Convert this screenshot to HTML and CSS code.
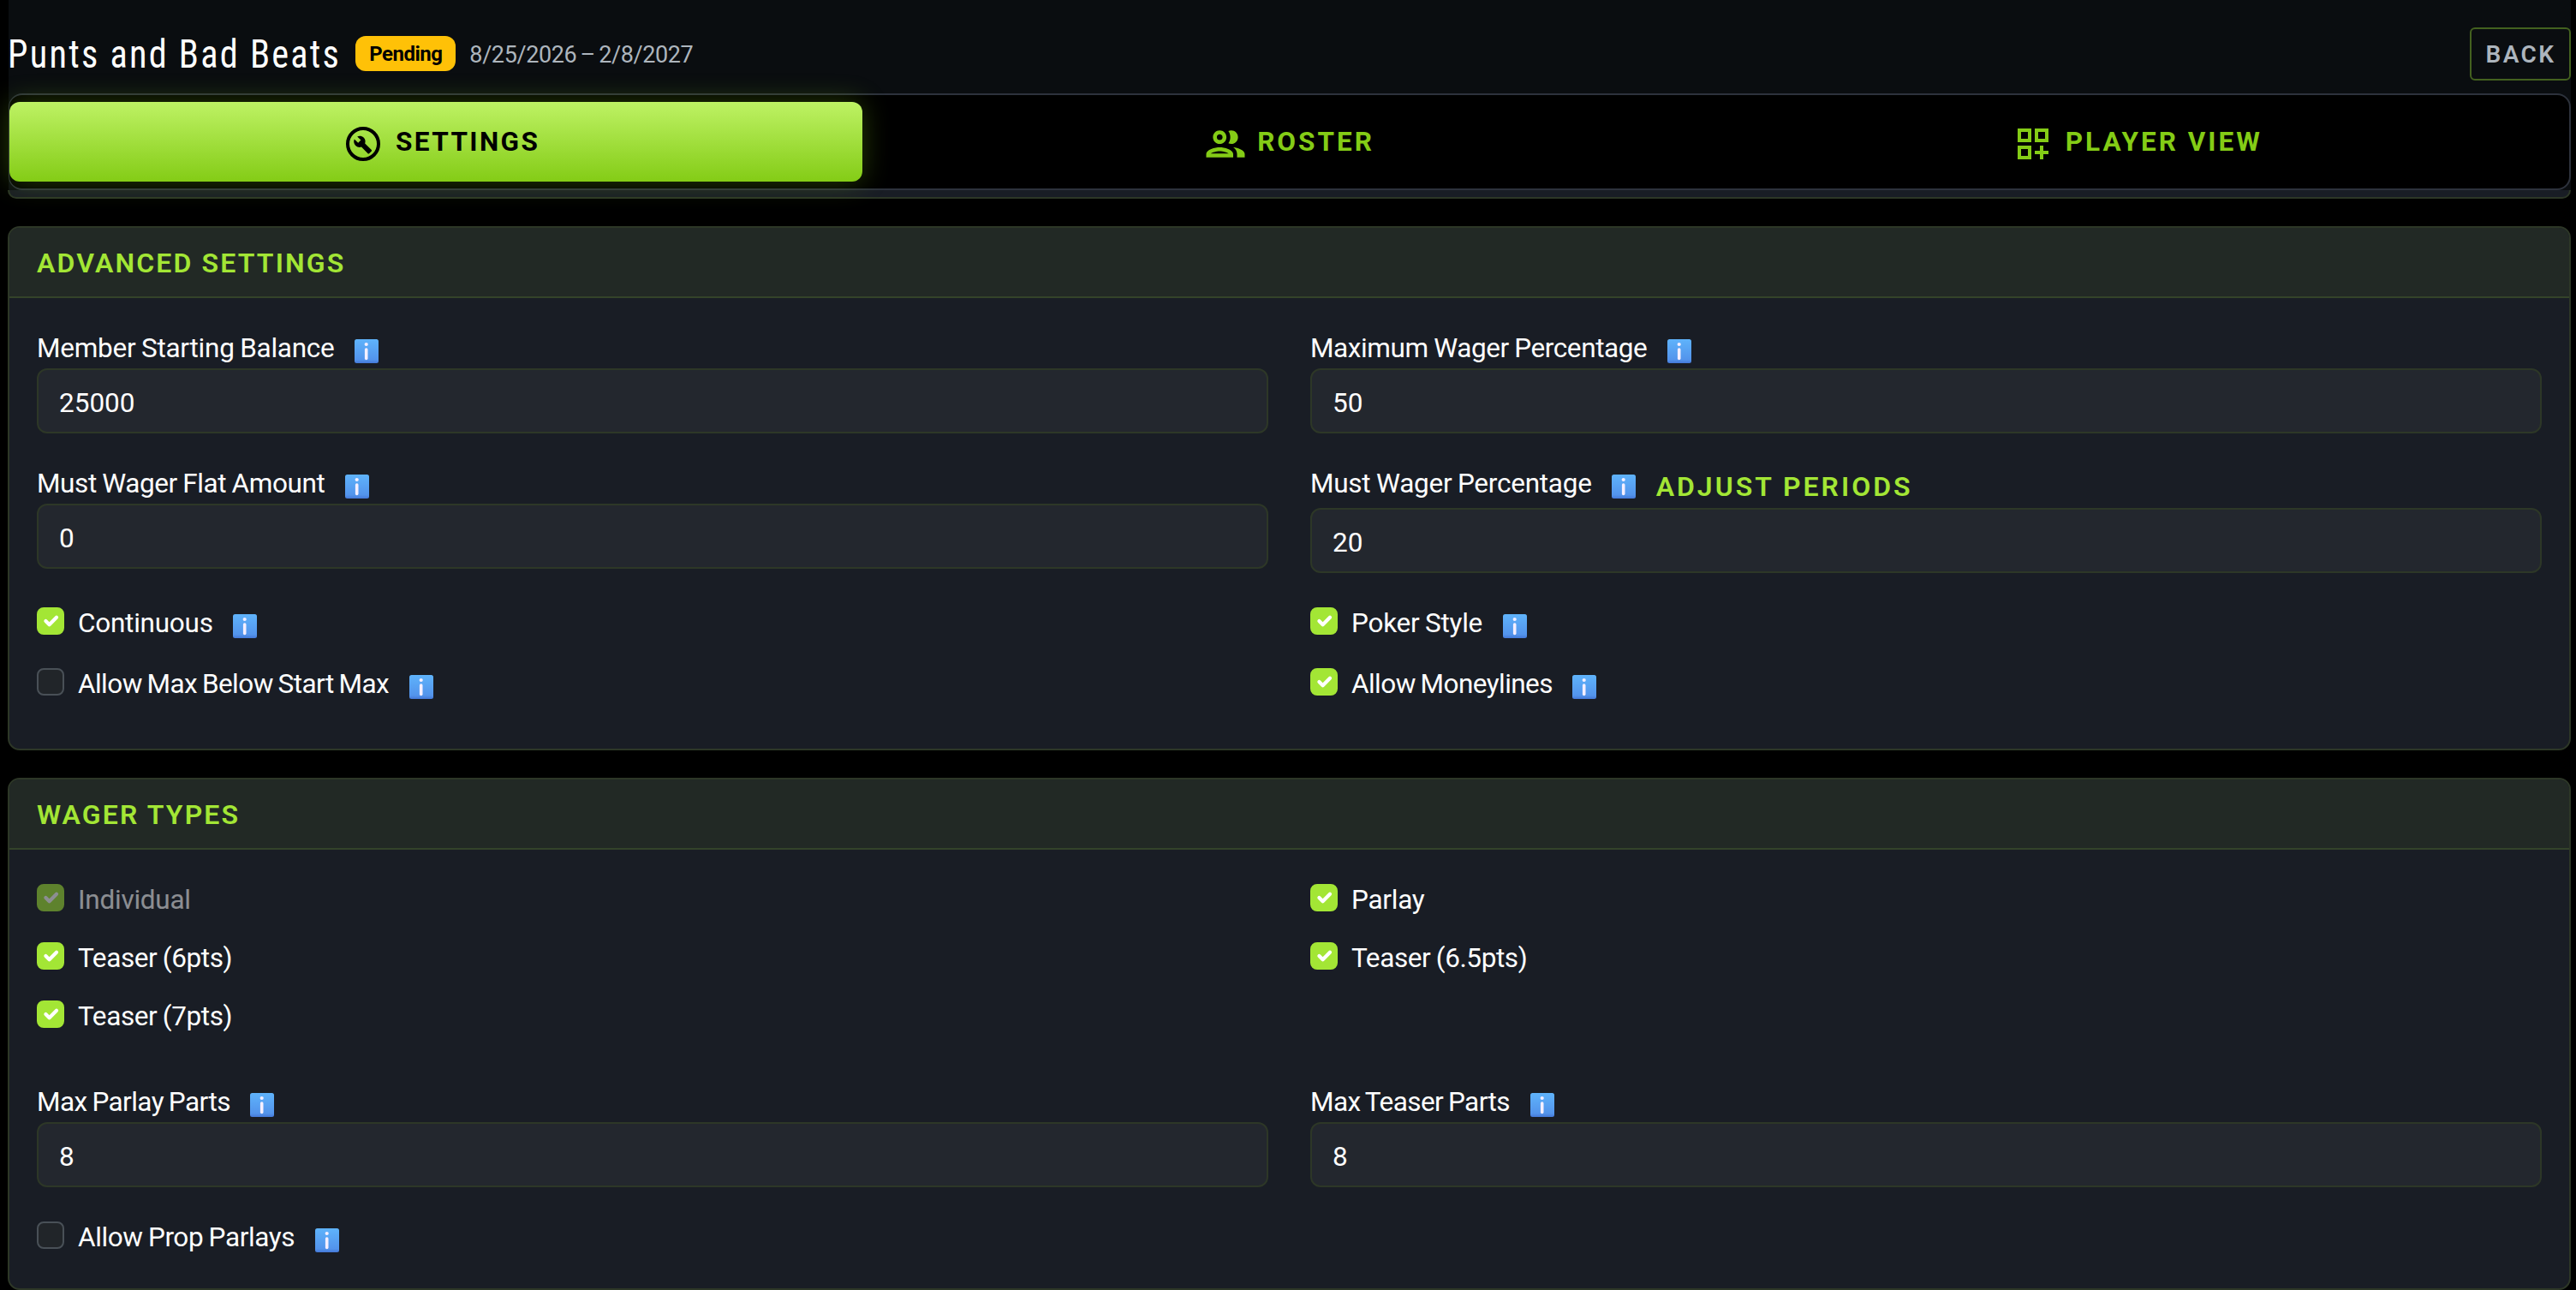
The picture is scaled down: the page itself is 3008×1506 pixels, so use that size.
FILE: index.html
```html
<!DOCTYPE html>
<html lang="en">
<head>
    <meta charset="UTF-8">
    <meta name="viewport" content="width=device-width, initial-scale=1.0">
    <title>Punts and Bad Beats</title>
    <link rel="stylesheet" href="styles.css">
</head>
<body>
    <!-- Shared icons -->
    <svg class="sprite">
        <linearGradient id="info-bg" x1="0" y1="0" x2="0" y2="1">
            <stop offset="0" stop-color="#5fb3fb"/>
            <stop offset="0.85" stop-color="#5394ec"/>
            <stop offset="1" stop-color="#4478d8"/>
        </linearGradient>
        <symbol id="info" viewBox="0 0 28 28">
            <rect width="28" height="28" rx="2.5" fill="url(#info-bg)"/>
            <circle cx="13.7" cy="6" r="2.1" fill="#f5efff"/>
            <path d="M13.7 12v10.5" stroke="#f5efff" stroke-width="3.6" stroke-linecap="round"/>
        </symbol>
    </svg>

    <header class="page-header">
        <div class="title-bar">
            <h1>Punts and Bad Beats</h1>
            <span class="badge">Pending</span>
            <span class="dates">8/25/2026 – 2/8/2027</span>
            <button class="back">Back</button>
        </div>
        <nav class="tabs">
            <a class="tab tab-settings active">
                <svg class="tab-icon" viewBox="0 0 24 24"><path fill="none" stroke="currentColor" stroke-width="2" d="M12 3a9 9 0 1 0 0 18a9 9 0 1 0 0-18z"/><path d="M16.9 15.5l-3.8-3.8c.4-1.1.2-2.5-.8-3.4-1-1-2.5-1.2-3.7-.6l2.1 2.1-1.6 1.6-2.2-2.1c-.6 1.2-.3 2.7.7 3.7.9.9 2.3 1.2 3.4.8l3.8 3.8c.2.2.5.2.7 0l1.4-1.4c.2-.2.2-.5 0-.7z"/></svg>
                <span>Settings</span>
            </a>
            <a class="tab tab-roster">
                <svg class="tab-icon" viewBox="0 0 24 24"><path d="M9 13.75c-2.34 0-7 1.17-7 3.5V19h14v-1.75c0-2.33-4.66-3.5-7-3.5zM4.34 17c.84-.58 2.87-1.25 4.66-1.25s3.82.67 4.66 1.25H4.34zM9 12c1.93 0 3.5-1.57 3.5-3.5S10.93 5 9 5 5.5 6.57 5.5 8.5 7.07 12 9 12zm0-5c.83 0 1.5.67 1.5 1.5S9.83 10 9 10s-1.5-.67-1.5-1.5S8.17 7 9 7zm7.04 6.81c1.16.84 1.96 1.96 1.96 3.44V19h4v-1.75c0-2.02-3.5-3.17-5.96-3.44zM15 12c1.93 0 3.5-1.57 3.5-3.5S16.93 5 15 5c-.54 0-1.04.13-1.5.35.63.89 1 1.98 1 3.15s-.37 2.26-1 3.15c.46.22.96.35 1.5.35z"/></svg>
                <span>Roster</span>
            </a>
            <a class="tab tab-player">
                <svg class="tab-icon" viewBox="0 0 24 24"><path d="M3 11h8V3H3v8zm2-6h4v4H5V5zm8-2v8h8V3h-8zm6 6h-4V5h4v4zM3 21h8v-8H3v8zm2-6h4v4H5v-4zm13-2h-2v3h-3v2h3v3h2v-3h3v-2h-3z"/></svg>
                <span>Player View</span>
            </a>
        </nav>
    </header>

    <main>
        <section class="card card-end"></section>

        <section class="card">
            <h2>Advanced Settings</h2>
            <div class="fields">
                <div class="field">
                    <label><span>Member Starting Balance</span><svg class="info"><use href="#info"/></svg></label>
                    <input type="text" value="25000">
                </div>
                <div class="field">
                    <label><span class="snug">Maximum Wager Percentage</span><svg class="info"><use href="#info"/></svg></label>
                    <input type="text" value="50">
                </div>
                <div class="field">
                    <label><span class="snug">Must Wager Flat Amount</span><svg class="info"><use href="#info"/></svg></label>
                    <input type="text" value="0">
                </div>
                <div class="field">
                    <label class="with-link"><span>Must Wager Percentage</span><svg class="info"><use href="#info"/></svg><a class="adjust">Adjust Periods</a></label>
                    <input type="text" value="20">
                </div>
            </div>
            <div class="checks spaced">
                <label class="check"><i class="box on"></i><span>Continuous</span><svg class="info"><use href="#info"/></svg></label>
                <label class="check"><i class="box on"></i><span>Poker Style</span><svg class="info"><use href="#info"/></svg></label>
                <label class="check"><i class="box"></i><span class="tight">Allow Max Below Start Max</span><svg class="info"><use href="#info"/></svg></label>
                <label class="check"><i class="box on"></i><span class="tight">Allow Moneylines</span><svg class="info"><use href="#info"/></svg></label>
            </div>
        </section>

        <section class="card">
            <h2>Wager Types</h2>
            <div class="checks types">
                <label class="check disabled"><i class="box on"></i><span>Individual</span></label>
                <label class="check"><i class="box on"></i><span>Parlay</span></label>
                <label class="check"><i class="box on"></i><span class="snug">Teaser (6pts)</span></label>
                <label class="check"><i class="box on"></i><span class="snug">Teaser (6.5pts)</span></label>
                <label class="check"><i class="box on"></i><span class="snug">Teaser (7pts)</span></label>
            </div>
            <div class="fields">
                <div class="field">
                    <label><span class="tight">Max Parlay Parts</span><svg class="info"><use href="#info"/></svg></label>
                    <input type="text" value="8">
                </div>
                <div class="field">
                    <label><span class="tight">Max Teaser Parts</span><svg class="info"><use href="#info"/></svg></label>
                    <input type="text" value="8">
                </div>
                <label class="check"><i class="box"></i><span class="snug">Allow Prop Parlays</span><svg class="info"><use href="#info"/></svg></label>
            </div>
        </section>
    </main>
</body>
</html>
```
FILE: styles.css
```css
* { box-sizing: border-box; }
body { margin: 0; padding: 0 6px 0 9px; background: #000; color: #fff; font-family: Roboto, sans-serif; font-size: 31.5px; line-height: 48px; overflow: hidden; }
.sprite { position: absolute; width: 0; height: 0; }

/* Header */
.page-header { background: #0a0d10; height: 222px; margin-left: 1px; }
.title-bar { display: flex; align-items: center; height: 109px; padding-top: 16px; }
h1 { margin: 0 -42px 0 -1px; font-size: 47px; font-weight: 400; font-stretch: 75%; letter-spacing: 2.5px; white-space: nowrap; transform: scaleX(0.9); transform-origin: left; }
.badge { margin-left: 16px; width: 117px; height: 41px; border-radius: 12px; background: #ffc107; color: #000; font-size: 24px; font-weight: 700; line-height: 42px; text-align: center; letter-spacing: -0.5px; }
.dates { margin-left: 16px; padding-top: 2px; color: #adb5bd; font-size: 27px; letter-spacing: -0.4px; word-spacing: -2px; }
.back { margin-left: auto; width: 118px; height: 62px; padding: 1px 0 0 1px; border: 2px solid #43611f; border-radius: 6px; background: none; color: #adb5bd; font: 600 28px Roboto, sans-serif; letter-spacing: 2.4px; text-transform: uppercase; }
.tabs { display: grid; grid-template-columns: repeat(3, 1fr); align-items: center; height: 113px; border: 2px solid #2d323c; border-left-width: 1px; border-radius: 16px; background: #000; }
.tab { display: flex; align-items: center; justify-content: center; gap: 14px; height: 93px; border-radius: 12px; color: #84cc16; font-weight: 700; letter-spacing: 3px; text-transform: uppercase; }
.tab.active { background: linear-gradient(#bef264, #84cc16); color: #000; box-shadow: 0 0 32px rgba(132, 204, 22, 0.3); }
.tab-settings { padding-left: 12px; letter-spacing: 2.4px; }
.tab-player { padding-right: 12px; }
.tab-icon { width: 48px; height: 48px; margin-top: 4px; fill: currentColor; }
.tab-roster { gap: 10px; padding-right: 2px; }
.tab-roster .tab-icon { width: 54px; height: 54px; }

/* Cards */
.card { margin-bottom: 32px; border: 2px solid #2d3727; border-radius: 14px; background: #191d25; overflow: hidden; }
.card-end { height: 10px; border-top: 0; border-radius: 0 0 14px 14px; }
h2 { margin: 0; height: 82px; padding: 0 32px; border-bottom: 2px solid #34432a; background: #222925; color: #a3e635; font-size: 32px; font-weight: 600; line-height: 83px; letter-spacing: 2.15px; text-transform: uppercase; }

/* Forms */
.fields, .checks { display: grid; grid-template-columns: 1fr 1fr; column-gap: 49px; padding: 34px 32px 0; }
.fields { row-gap: 34px; align-items: start; }
.checks.spaced { row-gap: 23px; padding-bottom: 52px; }
.checks.types { row-gap: 20px; padding-bottom: 18px; }
.card:last-child .fields { padding-bottom: 36px; }
.field label, .check { display: flex; height: 48px; white-space: nowrap; }
.field .with-link { height: 53px; }
label span { padding-top: 1px; letter-spacing: -0.25px; word-spacing: -1px; }
label .snug { letter-spacing: -0.4px; }
label .tight { letter-spacing: -0.55px; word-spacing: -1.5px; }
.info { width: 28px; height: 28px; margin: 14px 0 0 23.5px; }
.adjust { margin-left: 23.5px; color: #a3e635; font-size: 32px; font-weight: 600; line-height: 57px; letter-spacing: 3px; text-transform: uppercase; }
input { display: block; width: 100%; height: 76px; padding: 4px 24px 0; border: 2px solid #2d3727; border-radius: 12px; background: #23272e; color: #fff; font: inherit; }
.box { width: 32px; height: 32px; margin: 6px 16px 0 0; border: 2px solid #495057; border-radius: 8px; background: #212529; }
.box.on { border-color: #a3e635; background: #a3e635 url("data:image/svg+xml,%3Csvg xmlns='http://www.w3.org/2000/svg' viewBox='0 0 20 20'%3E%3Cpath fill='none' stroke='%23fff' stroke-linecap='round' stroke-linejoin='round' stroke-width='3' d='m6 10 3 3 6-6'/%3E%3C/svg%3E") center / 28px no-repeat; }
.disabled { opacity: 0.5; }
```
